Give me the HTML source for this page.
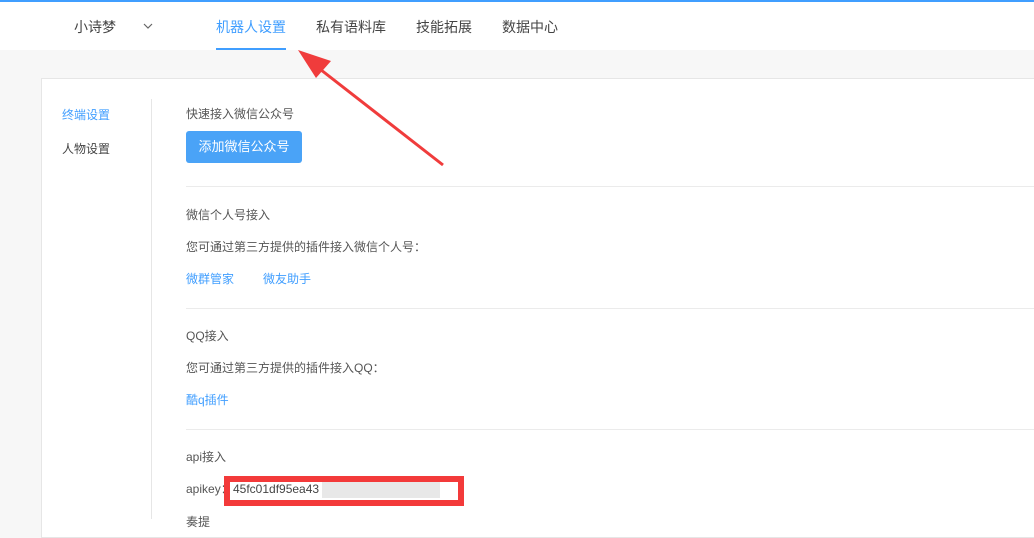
<!DOCTYPE html>
<html><head><meta charset="utf-8"><style>
*{margin:0;padding:0;box-sizing:border-box}
body{width:1034px;height:518px;overflow:hidden;background:#f7f7f7;font-family:"Liberation Sans","Noto Sans CJK SC",sans-serif;font-size:12px;color:#555;position:relative}
.top{position:absolute;left:0;top:0;width:1034px;height:50px;background:#fff;border-top:2px solid #409eff}
.t{position:absolute;font-size:14px;color:#444;top:15px}
.card{position:absolute;left:41px;top:78px;width:1000px;height:460px;background:#fff;border:1px solid #e6e6e6}
.a{position:absolute;white-space:nowrap;line-height:16px}
.blue{color:#409eff}
.hr{position:absolute;left:186px;width:860px;height:1px;background:#ebebeb}
</style></head><body>
<div class="top">
<div class="t" style="left:74px">小诗梦</div>
<svg style="position:absolute;left:143px;top:20px" width="10" height="8"><path d="M1 2 L5 6 L9 2" fill="none" stroke="#666" stroke-width="1.2"/></svg>
<div class="t blue" style="left:216px">机器人设置</div>
<div style="position:absolute;left:216px;top:46px;width:70px;height:2px;background:#409eff"></div>
<div class="t" style="left:316px">私有语料库</div>
<div class="t" style="left:416px">技能拓展</div>
<div class="t" style="left:502px">数据中心</div>
</div>
<div class="card"></div>
<div style="position:absolute;left:151px;top:99px;width:1px;height:420px;background:#e6e6e6"></div>
<div class="a blue" style="left:62px;top:107px">终端设置</div>
<div class="a" style="left:62px;top:141px;color:#444">人物设置</div>
<div class="a" style="left:186px;top:106px">快速接入微信公众号</div>
<div class="a" style="left:186px;top:131px;width:116px;height:32px;background:#4aa3f7;border-radius:3px;color:#fff;text-align:center;line-height:32px;font-size:13px">添加微信公众号</div>
<div class="hr" style="top:186px"></div>
<div class="a" style="left:186px;top:207px">微信个人号接入</div>
<div class="a" style="left:186px;top:239px">您可通过第三方提供的插件接入微信个人号：</div>
<div class="a blue" style="left:186px;top:271px">微群管家</div>
<div class="a blue" style="left:263px;top:271px">微友助手</div>
<div class="hr" style="top:308px"></div>
<div class="a" style="left:186px;top:328px">QQ接入</div>
<div class="a" style="left:186px;top:360px">您可通过第三方提供的插件接入QQ：</div>
<div class="a blue" style="left:186px;top:392px">酷q插件</div>
<div class="hr" style="top:429px"></div>
<div class="a" style="left:186px;top:449px">api接入</div>
<div class="a" style="left:186px;top:481px">apikey：</div>
<div style="position:absolute;left:224px;top:476px;width:240px;height:30px;border:6px solid #f33a3a;background:#fff"></div>
<div class="a" style="left:233px;top:481px;color:#444">45fc01df95ea43</div>
<div style="position:absolute;left:322px;top:482px;width:118px;height:16px;background:#e8e8e8"></div>
<div class="a" style="left:186px;top:514px">奏提</div>
<svg style="position:absolute;left:0;top:0" width="1034" height="518"><path d="M443 165 L316 66" stroke="#f03c3c" stroke-width="3"/><path d="M298 50 L331 61 L316 78 Z" fill="#f03c3c"/></svg>
</body></html>
